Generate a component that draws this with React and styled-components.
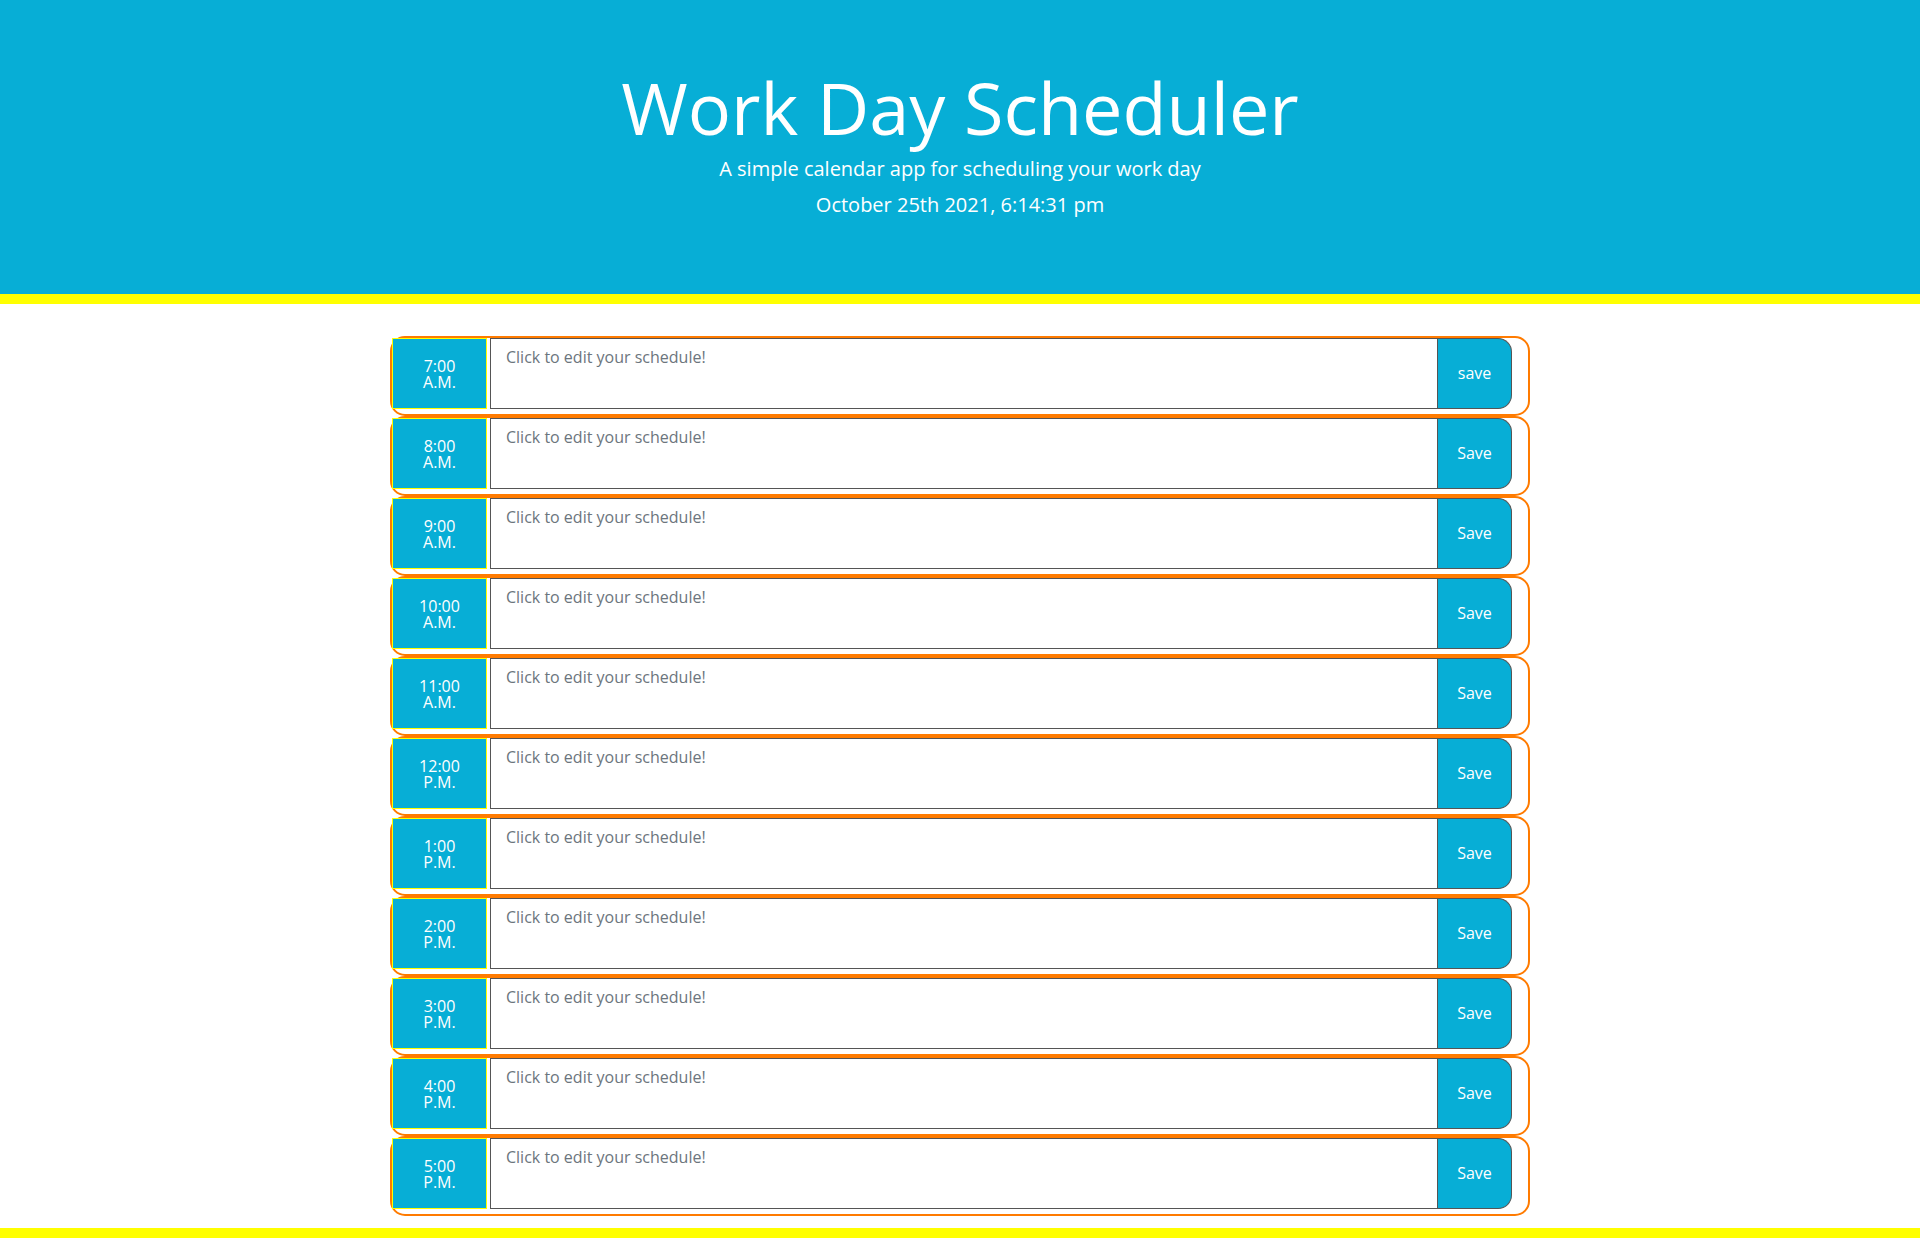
import React from 'react';
import styled, { createGlobalStyle } from 'styled-components';

const GlobalStyle = createGlobalStyle`
  html, body {
    margin: 0;
    padding: 0;
    background: #fff;
    font-family: "Open Sans", "Liberation Sans", sans-serif;
  }
  * {
    box-sizing: border-box;
  }
`;

const Header = styled.header`
  background: #07aed6;
  color: #fff;
  text-align: center;
  padding: 64px 32px;
  border-bottom: 10px solid #ffff00;
  margin-bottom: 32px;
`;

const Title = styled.h1`
  font-size: 72px;
  font-weight: 400;
  line-height: 86px;
  margin: 0 0 4px;
`;

const Lead = styled.p`
  font-size: 20px;
  line-height: 30px;
  margin: 0 0 ${props => props.last ? '10px' : '6px'};
`;

const Container = styled.div`
  width: 1140px;
  margin: 0 auto;
`;

const Row = styled.div`
  display: flex;
  border: 2px solid #ff7b00;
  border-radius: 15px;
  padding: 0 16px 5px 0;
`;

const Hour = styled.div`
  width: 95px;
  height: 71px;
  flex-shrink: 0;
  background: #07aed6;
  border: 1px solid #ffff00;
  color: #fff;
  font-size: 16px;
  line-height: 16px;
  text-align: center;
  display: flex;
  align-items: center;
  justify-content: center;
  padding-top: 1px;
`;

const Entry = styled.textarea`
  flex: 1;
  height: 71px;
  margin: 0 0 0 3px;
  border: 1px solid #555;
  padding: 6px 15px;
  font-family: "Open Sans", "Liberation Sans", sans-serif;
  font-size: 16px;
  line-height: 24px;
  resize: none;
  outline: none;

  &::placeholder {
    color: #6c757d;
  }
`;

const SaveButton = styled.button`
  width: 74px;
  height: 71px;
  flex-shrink: 0;
  background: #07aed6;
  color: #fff;
  border: 1px solid #555;
  border-left: none;
  border-radius: 0 14px 14px 0;
  font-family: "Open Sans", "Liberation Sans", sans-serif;
  font-size: 16px;
  padding: 0 0 2px;
  cursor: pointer;
`;

const Footer = styled.footer`
  margin-top: 12px;
  border-top: 10px solid #ffff00;
  height: 40px;
`;

const hours = [
  ['7:00', 'A.M.'],
  ['8:00', 'A.M.'],
  ['9:00', 'A.M.'],
  ['10:00', 'A.M.'],
  ['11:00', 'A.M.'],
  ['12:00', 'P.M.'],
  ['1:00', 'P.M.'],
  ['2:00', 'P.M.'],
  ['3:00', 'P.M.'],
  ['4:00', 'P.M.'],
  ['5:00', 'P.M.'],
];

const App = () => {
  return (
    <>
      <GlobalStyle />
      <Header>
        <Title>Work Day Scheduler</Title>
        <Lead>A simple calendar app for scheduling your work day</Lead>
        <Lead last>October 25th 2021, 6:14:31 pm</Lead>
      </Header>
      <Container>
        {hours.map(([time, period], i) => (
          <Row key={time}>
            <Hour>
              <span>
                {time}
                <br />
                {period}
              </span>
            </Hour>
            <Entry placeholder="Click to edit your schedule!" />
            <SaveButton>{i === 0 ? 'save' : 'Save'}</SaveButton>
          </Row>
        ))}
      </Container>
      <Footer />
    </>
  );
};

export default App;
